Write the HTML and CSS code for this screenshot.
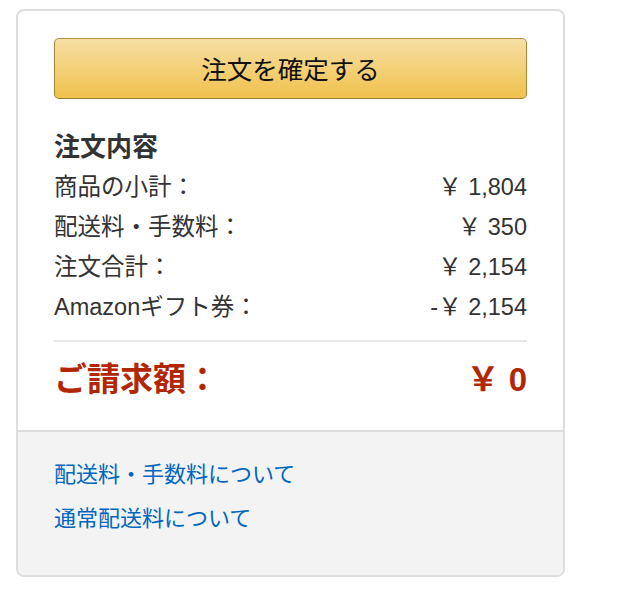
FILE: index.html
```html
<!DOCTYPE html>
<html lang="ja">
<head>
    <meta charset="UTF-8">
    <title>注文内容</title>
    <link rel="stylesheet" href="styles.css">
</head>
<body>
    <div class="order-box">
        <div class="order-main">
            <button class="place-order">注文を確定する</button>
            <h3 class="summary-title">注文内容</h3>
            <div class="summary-row"><span>商品の小計：</span><span>￥ 1,804</span></div>
            <div class="summary-row"><span>配送料・手数料：</span><span>￥ 350</span></div>
            <div class="summary-row"><span>注文合計：</span><span>￥ 2,154</span></div>
            <div class="summary-row"><span>Amazonギフト券：</span><span>-￥ 2,154</span></div>
            <div class="summary-total"><span>ご請求額：</span><span>￥ 0</span></div>
        </div>
        <div class="order-footer">
            <a href="#">配送料・手数料について</a>
            <a href="#">通常配送料について</a>
        </div>
    </div>
</body>
</html>
```

FILE: styles.css
```css
body {
    margin: 0;
    font-family: "Liberation Sans", "Noto Sans CJK JP", sans-serif;
    color: #333;
    background: #fff;
}
.order-box {
    box-sizing: border-box;
    width: 549px;
    margin: 9px 0 0 16px;
    border: 2px solid #ddd;
    border-radius: 8px;
    overflow: hidden;
}
.order-main {
    padding: 27px 36px 27px;
}
.place-order {
    display: block;
    width: 100%;
    height: 61px;
    padding: 0 0 3px;
    border: 1px solid #a88734;
    border-color: #b69544 #a88734 #9c7e31;
    border-radius: 5px;
    background: linear-gradient(to bottom, #f7dfa5, #f0c14b);
    font-family: "Liberation Sans", "Noto Sans CJK JP", sans-serif;
    font-size: 25.5px;
    color: #111;
    cursor: pointer;
}
.summary-title {
    margin: 28px 0 0;
    font-size: 26px;
    line-height: 40px;
    font-weight: bold;
    color: #333;
}
.summary-row {
    display: flex;
    justify-content: space-between;
    font-size: 23.5px;
    line-height: 40px;
}
.summary-total {
    display: flex;
    justify-content: space-between;
    margin-top: 13px;
    padding-top: 14px;
    border-top: 2px solid #e7e7e7;
    font-size: 33px;
    line-height: 47px;
    font-weight: bold;
    color: #b12704;
}
.order-footer {
    display: flex;
    flex-direction: column;
    align-items: flex-start;
    padding: 21px 36px 34px;
    border-top: 2px solid #ddd;
    background: #f3f3f3;
}
.order-footer a {
    font-size: 22px;
    line-height: 44px;
    color: #0066c0;
    text-decoration: none;
}
```
